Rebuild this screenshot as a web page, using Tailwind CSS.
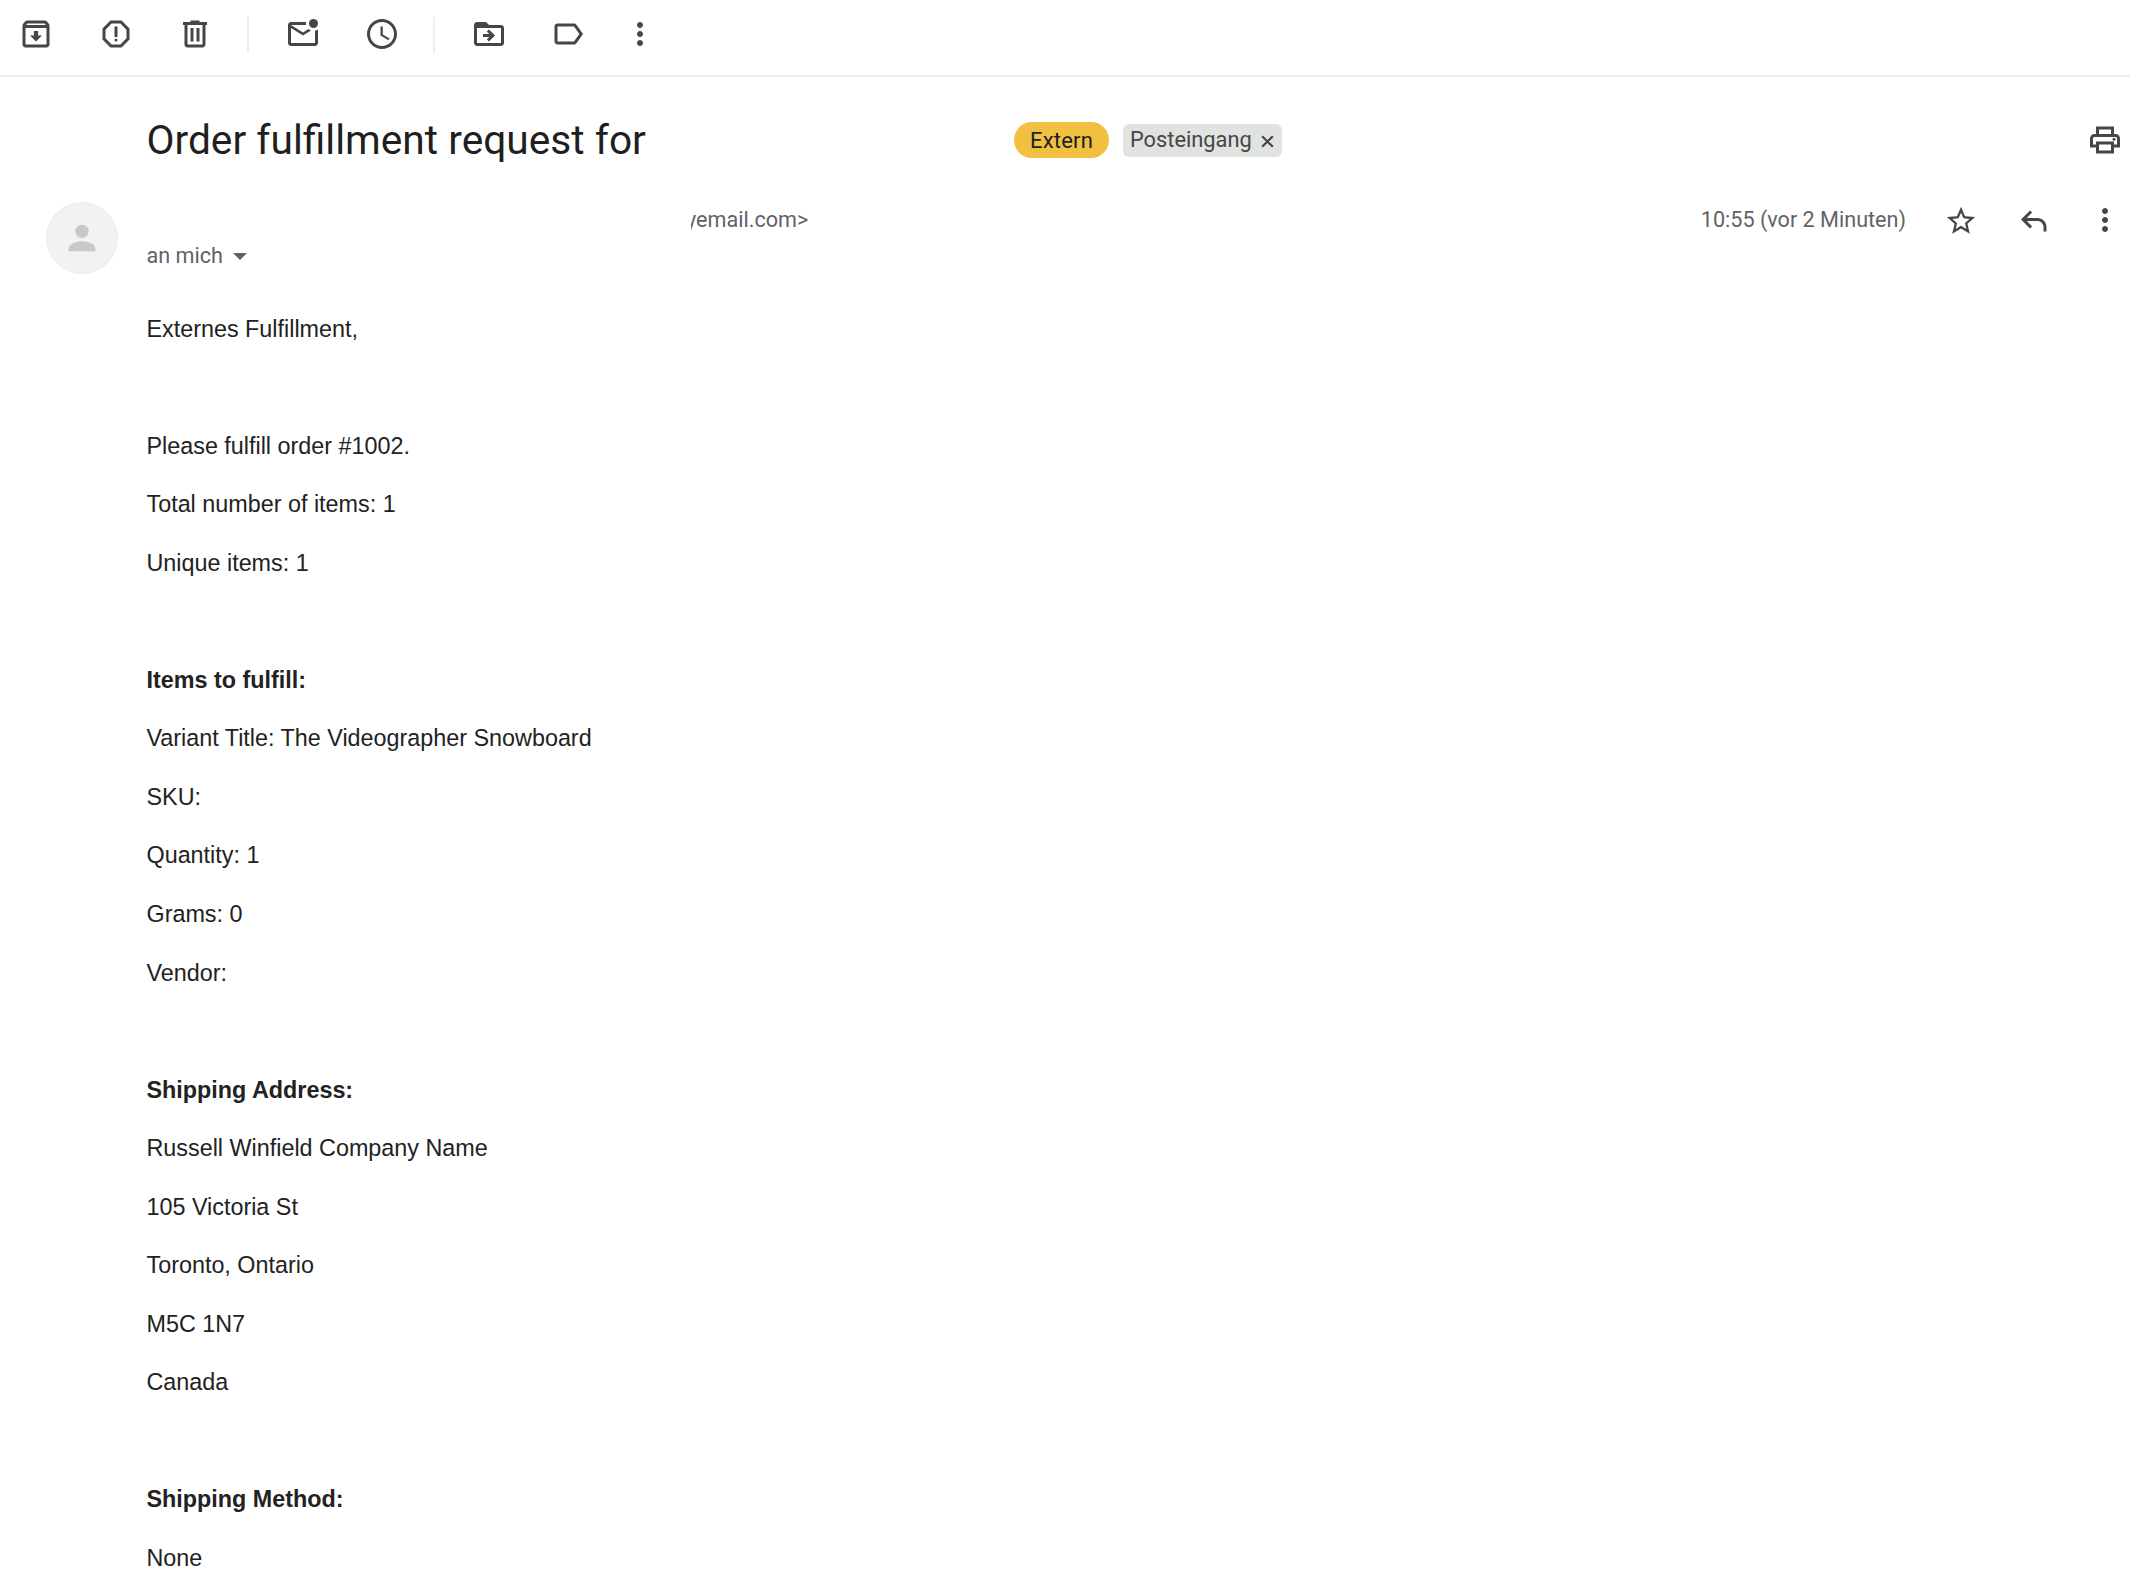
<!DOCTYPE html>
<html>

<head>
    <meta charset="utf-8">
    <title>Order fulfillment request</title>
    <script src="https://cdn.jsdelivr.net/npm/@tailwindcss/browser@4"></script>
</head>

<body class="bg-white text-[#222222] font-['Liberation_Sans',Arial,sans-serif] h-screen overflow-hidden">

    <!-- toolbar -->
    <div class="h-[77px] border-b-2 border-b-[#efefef] flex items-start pt-[16px] pl-[18px] text-[#444746]">
        <svg class="w-9 h-9" viewBox="0 0 24 24" fill="currentColor"><path d="M20.54 5.23l-1.39-1.68C18.88 3.21 18.47 3 18 3H6c-.47 0-.88.21-1.16.55L3.46 5.23C3.17 5.57 3 6.02 3 6.5V19c0 1.1.9 2 2 2h14c1.1 0 2-.9 2-2V6.5c0-.48-.17-.93-.46-1.27zM6.24 5h11.52l.83 1H5.42l.82-1zM5 19V8h14v11H5zm8.45-9h-2.9v3H8l4 4 4-4h-2.55z"/></svg>
        <svg class="w-9 h-9 ml-[43.500px]" viewBox="0 0 24 24" fill="currentColor"><path d="M15.73 3H8.27L3 8.27v7.46L8.27 21h7.46L21 15.73V8.27L15.73 3zM19 14.9L14.9 19H9.1L5 14.9V9.1L9.1 5h5.8L19 9.1v5.8z"/><circle cx="12" cy="16" r="1"/><rect x="11" y="7" width="2" height="7"/></svg>
        <svg class="w-9 h-9 ml-[43px]" viewBox="0 0 24 24" fill="currentColor"><path d="M15 4V3H9v1H4v2h1v13c0 1.1.9 2 2 2h10c1.1 0 2-.9 2-2V6h1V4h-5zm2 15H7V6h10v13zM9 8h2v9H9zm4 0h2v9h-2z"/></svg>
        <div class="w-[2px] h-[36px] bg-[#eeeeee] ml-[34px] mt-[1px]"></div>
        <svg class="w-9 h-9 ml-[36px]" viewBox="0 0 24 24" fill="currentColor"><path d="M22 8.98V18c0 1.1-.9 2-2 2H4c-1.1 0-2-.9-2-2V6c0-1.1.9-2 2-2h10.1c-.06.32-.1.66-.1 1s.04.68.1 1H4l8 5 3.67-2.29c.47.43 1.02.76 1.63.98L12 13 4 8v10h16V9.9c.74-.15 1.42-.48 2-.92z"/><circle cx="19" cy="5" r="3"/></svg>
        <svg class="w-9 h-9 ml-[43.500px]" viewBox="0 0 24 24" fill="currentColor"><path d="M11.99 2C6.47 2 2 6.48 2 12s4.47 10 9.99 10C17.52 22 22 17.52 22 12S17.52 2 11.99 2zM12 20c-4.42 0-8-3.58-8-8s3.58-8 8-8 8 3.58 8 8-3.58 8-8 8zm.5-13H11v6l5.25 3.15.75-1.23-4.5-2.67z"/></svg>
        <div class="w-[2px] h-[36px] bg-[#eeeeee] ml-[33px] mt-[1px]"></div>
        <svg class="w-9 h-9 ml-[35.500px]" viewBox="0 0 24 24" fill="currentColor"><path d="M20 6h-8l-2-2H4c-1.1 0-1.99.9-1.99 2L2 18c0 1.1.9 2 2 2h16c1.1 0 2-.9 2-2V8c0-1.1-.9-2-2-2zm0 12H4V8h16v10zm-8.01-9l-1.41 1.41L12.16 12H8v2h4.16l-1.59 1.59L11.99 17 16 13.01 11.99 9z"/></svg>
        <svg class="w-9 h-9 ml-[43px]" viewBox="0 0 24 24" fill="currentColor"><path d="M17.63 5.84C17.27 5.33 16.67 5 16 5L5 5.01C3.9 5.01 3 5.9 3 7v10c0 1.1.9 1.99 2 1.99L16 19c.67 0 1.27-.33 1.63-.84L22 12l-4.37-6.16zM16 17H5V7h11l3.55 5L16 17z"/></svg>
        <svg class="w-9 h-9 ml-[36.500px]" viewBox="0 0 24 24" fill="currentColor"><path d="M12 8c1.1 0 2-.9 2-2s-.9-2-2-2-2 .9-2 2 .9 2 2 2zm0 2c-1.1 0-2 .9-2 2s.9 2 2 2 2-.9 2-2-.9-2-2-2zm0 6c-1.1 0-2 .9-2 2s.9 2 2 2 2-.9 2-2-.9-2-2-2z"/></svg>
    </div>

    <!-- subject -->
    <div class="mt-[45px] h-9 pl-[146.500px] pr-[7px] flex items-center">
        <h1 class="w-[867.500px] text-[40.700px] leading-none mt-[1px] text-[#1f1f1f] font-['Roboto',sans-serif]">Order fulfillment request for</h1>
        <span class="w-[95px] h-9 rounded-full bg-[#f2c040] flex items-center justify-center text-[22px] tracking-[0.2px] text-[#202124] font-['Roboto',sans-serif]">Extern</span>
        <span class="ml-[14px] w-[159px] h-[33px] rounded-md bg-[#e1e3e1] pl-[7px] flex items-center text-[21.800px] text-[#444746] font-['Roboto',sans-serif]">Posteingang
            <svg class="w-[15px] h-[15px] ml-[8px] mt-[2px]" viewBox="0 0 14 14" stroke="currentColor" stroke-width="2"><path d="M2 2l10 10M12 2L2 12"/></svg>
        </span>
        <svg class="w-9 h-9 ml-auto text-[#444746]" viewBox="0 0 24 24" fill="currentColor"><path d="M19 8h-1V3H6v5H5c-1.66 0-3 1.34-3 3v6h4v4h12v-4h4v-6c0-1.66-1.34-3-3-3zM8 5h8v3H8V5zm8 12v2H8v-4h8v2zm2-2v-2H6v2H4v-4c0-.55.45-1 1-1h14c.55 0 1 .45 1 1v4h-2z"/><circle cx="18" cy="11.5" r="1"/></svg>
    </div>

    <!-- sender -->
    <div class="mt-[44px] flex pl-[46px] pr-[7px]">
        <div class="w-[72px] h-[72px] rounded-full bg-[#f2f2f2] border border-[#ececec] flex items-center justify-center">
            <svg class="w-[40px] h-[40px] text-[#c8c8c8]" viewBox="0 0 24 24" fill="currentColor"><circle cx="12" cy="8" r="4"/><path d="M12 14c-3.6 0-8 1.7-8 4.5V20h16v-1.500c0-2.800-4.400-4.500-8-4.500z"/></svg>
        </div>
        <div class="ml-[28.500px] flex-1">
            <div class="h-9 flex items-center -mt-[1px]">
                <span class="ml-[544.500px] mt-[3px] w-[118px] overflow-hidden whitespace-nowrap text-[21.600px] text-[#5f6368] font-['Roboto',sans-serif]"><span class="-ml-[5px]">yemail.com&gt;</span></span>
                <span class="ml-auto mt-[3px] text-[21.600px] text-[#5f6368] font-['Roboto',sans-serif]">10:55 (vor 2 Minuten)</span>
                <svg class="w-[34px] h-[34px] ml-[38px] mt-[3px] text-[#444746]" viewBox="0 0 24 24" fill="currentColor"><path d="M22 9.24l-7.19-.62L12 2 9.190 8.630 2 9.240l5.460 4.730L5.820 21 12 17.270 18.180 21l-1.630-7.030L22 9.240zM12 15.400l-3.760 2.270 1-4.280-3.320-2.880 4.380-.38L12 6.100l1.710 4.040 4.380.38-3.320 2.880 1 4.280L12 15.400z"/></svg>
                <svg class="w-9 h-9 ml-[36.500px] mt-[3px] text-[#444746]" viewBox="0 0 24 24" fill="currentColor"><path d="M21 19h-2v-3c0-2.200-1.800-4-4-4H7.830l3.580 3.590L10 17l-6-6 6-6 1.410 1.410L7.830 10H15c3.310 0 6 2.690 6 6v3z"/></svg>
                <svg class="w-9 h-9 ml-[36.500px] mt-[1px] text-[#444746]" viewBox="0 0 24 24" fill="currentColor"><path d="M12 8c1.100 0 2-.9 2-2s-.9-2-2-2-2 .9-2 2 .9 2 2 2zm0 2c-1.100 0-2 .9-2 2s.9 2 2 2 2-.9 2-2-.9-2-2-2zm0 6c-1.100 0-2 .9-2 2s.9 2 2 2 2-.9 2-2-.9-2-2-2z"/></svg>
            </div>
            <div class="mt-[3px] flex items-center text-[21.600px] text-[#5f6368] font-['Roboto',sans-serif]">an mich
                <span class="ml-[10.500px] mt-[1px] w-0 h-0 border-x-[7px] border-x-transparent border-t-[7px] border-t-[#5f6368]"></span>
            </div>
        </div>
    </div>

    <!-- message body -->
    <div class="mt-[25.500px] pl-[146.500px] text-[23.350px] leading-[58.550px]">
        <p>Externes Fulfillment,</p>
        <p>&nbsp;</p>
        <p>Please fulfill order #1002.</p>
        <p>Total number of items: 1</p>
        <p>Unique items: 1</p>
        <p>&nbsp;</p>
        <p class="font-bold">Items to fulfill:</p>
        <p>Variant Title: The Videographer Snowboard</p>
        <p>SKU:</p>
        <p>Quantity: 1</p>
        <p>Grams: 0</p>
        <p>Vendor:</p>
        <p>&nbsp;</p>
        <p class="font-bold">Shipping Address:</p>
        <p>Russell Winfield Company Name</p>
        <p>105 Victoria St</p>
        <p>Toronto, Ontario</p>
        <p>M5C 1N7</p>
        <p>Canada</p>
        <p>&nbsp;</p>
        <p class="font-bold">Shipping Method:</p>
        <p>None</p>
    </div>

</body>

</html>
